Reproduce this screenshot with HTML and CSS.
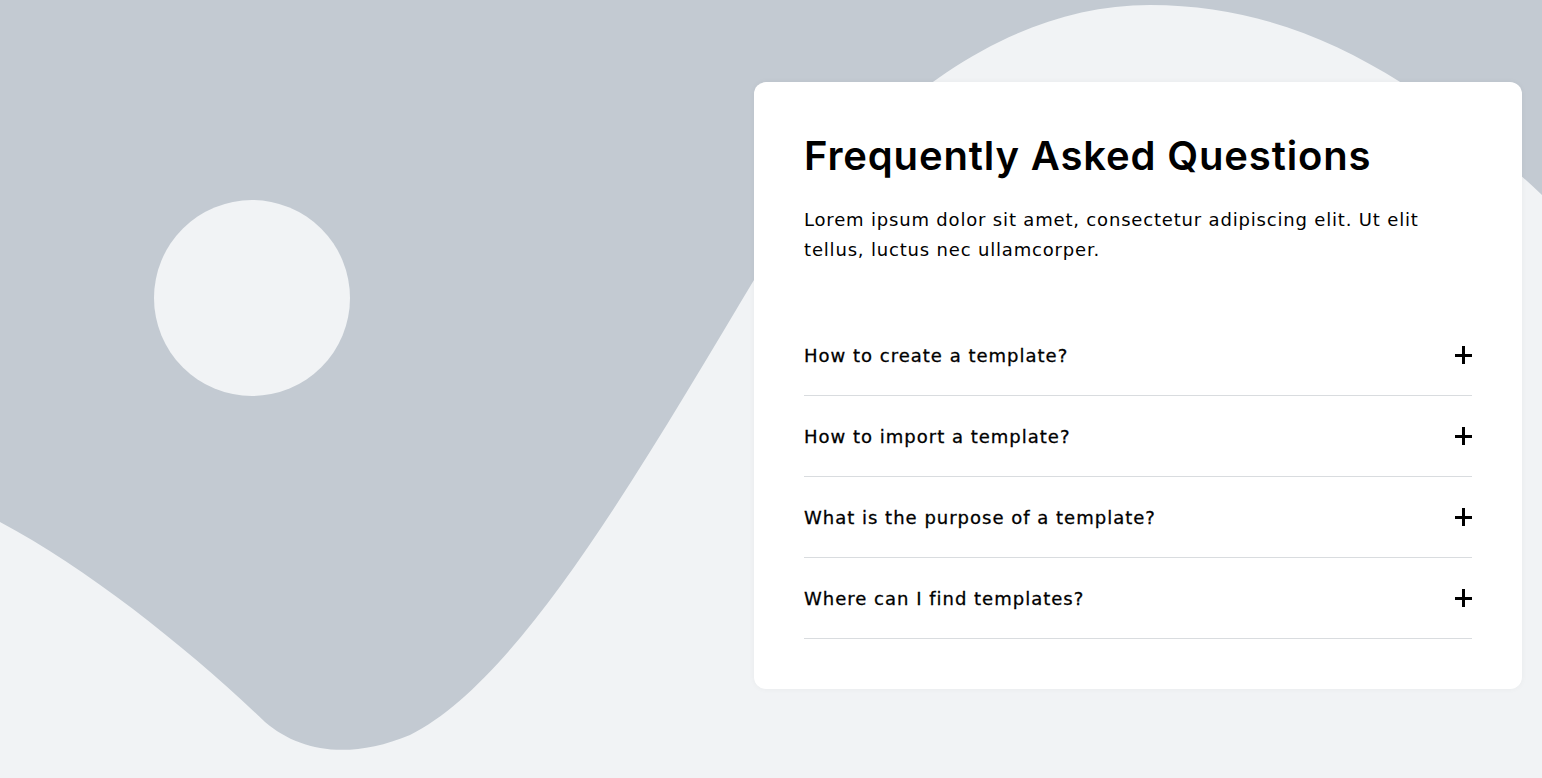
FILE: index.html
```html
<!DOCTYPE html>
<html lang="en">
<head>
<meta charset="utf-8">
<title>FAQ</title>
<link rel="stylesheet" href="styles.css">
</head>
<body>
<div class="page">
  <svg class="backdrop" viewBox="0 0 1542 778" preserveAspectRatio="none" aria-hidden="true">
    <rect width="1542" height="778" fill="#c3cad2"/>
    <path d="M0 522 C 90 570, 190 650, 265 722 C 300 752, 350 760, 410 735 C 520 680, 640 470, 760 270 C 850 130, 990 5, 1150 5 C 1300 5, 1420 80, 1542 195 L 1542 778 L 0 778 Z" fill="#f1f3f5"/>
    <circle cx="252" cy="298" r="98" fill="#f1f3f5"/>
  </svg>
  <section class="card">
    <h1 class="title">Frequently Asked Questions</h1>
    <p class="lead">Lorem ipsum dolor sit amet, consectetur adipiscing elit. Ut elit tellus, luctus nec ullamcorper.</p>
    <ul class="faq">
      <li class="faq-item"><span class="q">How to create a template?</span><span class="plus"></span></li>
      <li class="faq-item"><span class="q">How to import a template?</span><span class="plus"></span></li>
      <li class="faq-item"><span class="q">What is the purpose of a template?</span><span class="plus"></span></li>
      <li class="faq-item"><span class="q">Where can I find templates?</span><span class="plus"></span></li>
    </ul>
  </section>
</div>
</body>
</html>
```
FILE: styles.css
```css
* { box-sizing: border-box; }
html, body { margin: 0; padding: 0; }
body {
  background: #f1f3f5;
  font-family: "Inter", "Open Sans", sans-serif;
  color: #000;
  overflow: hidden;
}
.page {
  position: relative;
  width: 100%;
  height: 778px;
  display: flex;
  justify-content: flex-end;
  align-items: flex-start;
  padding: 82px 20px 0 0;
}
.backdrop {
  position: absolute;
  left: 0;
  top: 0;
  width: 100%;
  height: 100%;
  display: block;
}
.card {
  position: relative;
  width: 768px;
  background: #fff;
  border-radius: 12px;
  padding: 50px;
  box-shadow: 0 0 6px rgba(0, 0, 0, 0.04);
}
.title {
  margin: 0;
  font-size: 40px;
  line-height: 48px;
  font-weight: 600;
  letter-spacing: 0.85px;
}
.lead {
  margin: 25px 0 0;
  font-family: "DejaVu Sans", sans-serif;
  font-size: 18px;
  line-height: 30px;
  font-weight: 400;
  letter-spacing: 0.82px;
}
.faq {
  list-style: none;
  margin: 50px 0 0;
  padding: 0;
}
.faq-item {
  height: 81px;
  display: flex;
  align-items: center;
  justify-content: space-between;
  border-bottom: 1px solid #d9dcdf;
  font-family: "DejaVu Sans", sans-serif;
  font-size: 18px;
  line-height: 27px;
  font-weight: 400;
  letter-spacing: 1px;
  -webkit-text-stroke: 0.3px #000;
}
.plus {
  position: relative;
  width: 17px;
  height: 18px;
  flex: none;
}
.plus::before, .plus::after {
  content: "";
  position: absolute;
  background: #000;
}
.plus::before {
  left: 0;
  right: 0;
  top: 7.5px;
  height: 3px;
}
.plus::after {
  top: 0;
  bottom: 0;
  left: 7px;
  width: 3px;
}
```
